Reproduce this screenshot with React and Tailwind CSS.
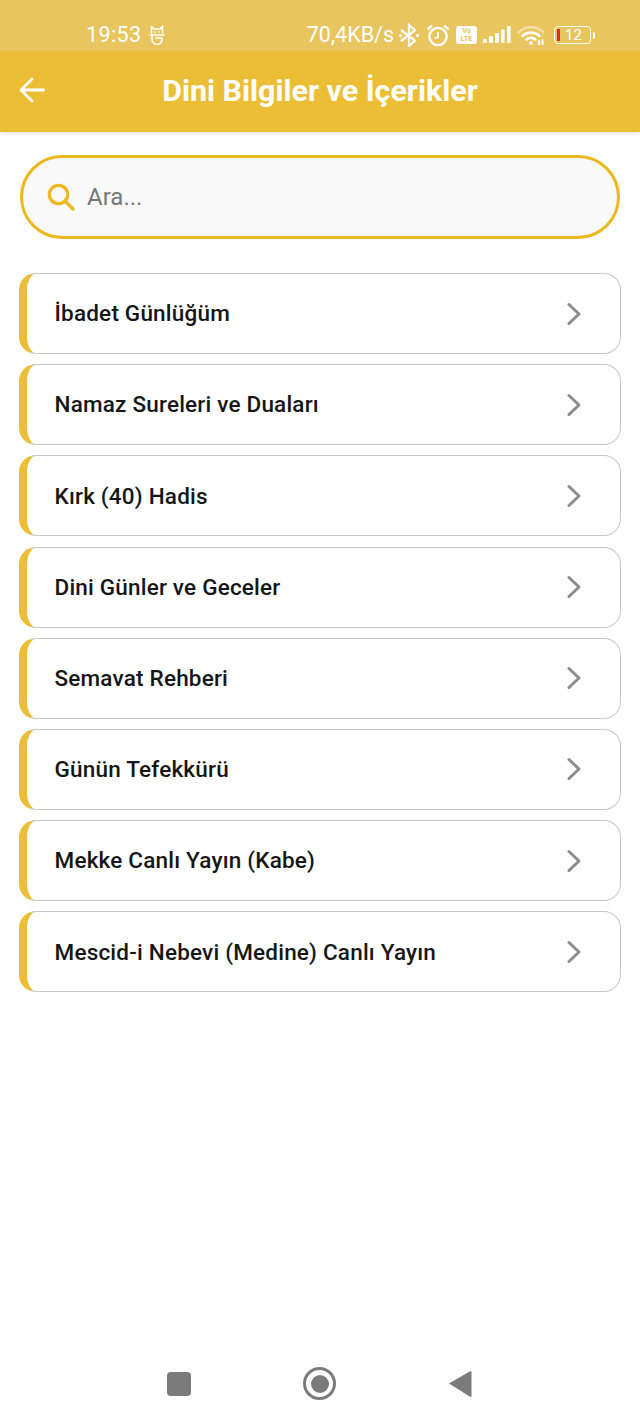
import React from "react";

const items = [
  "İbadet Günlüğüm",
  "Namaz Sureleri ve Duaları",
  "Kırk (40) Hadis",
  "Dini Günler ve Geceler",
  "Semavat Rehberi",
  "Günün Tefekkürü",
  "Mekke Canlı Yayın (Kabe)",
  "Mescid-i Nebevi (Medine) Canlı Yayın",
];

function StatusIcons() {
  return (
    <div className="flex items-center">
      <svg width="22" height="24" viewBox="0 0 22 24" className="ml-[4px]" fill="none" stroke="#fff" strokeWidth="2.2">
        <path d="M3 7l14 10.5L11 23V2l6 5.5L3 18" />
        <circle cx="2.5" cy="12.5" r="1.5" fill="#fff" stroke="none" />
        <circle cx="19.5" cy="12.5" r="1.5" fill="#fff" stroke="none" />
      </svg>
      <svg width="24" height="24" viewBox="0 0 24 24" className="ml-[6px]" fill="none" stroke="#fff" strokeWidth="2.4">
        <circle cx="12" cy="13.5" r="8.6" />
        <path d="M12 9v5l-3.5 1.5" strokeWidth="1.9" />
        <path d="M1.5 6.5 6 2.5M22.5 6.5 18 2.5" />
      </svg>
      <div className="ml-[6px] flex h-[18px] w-[21px] flex-col items-center justify-center rounded-[3px] bg-white text-[7.5px] leading-[8px] font-bold text-[#e8c55e] font-['Roboto',sans-serif]">
        <span>Vo</span>
        <span>LTE</span>
      </div>
      <svg width="28" height="18" viewBox="0 0 28 18" className="ml-[6px]" fill="#fff">
        <rect x="0" y="13" width="4" height="4" rx="1" />
        <rect x="6" y="10" width="4" height="7" rx="1" />
        <rect x="12" y="7" width="4" height="10" rx="1" />
        <rect x="18" y="3.5" width="3.6" height="13.5" rx="1" />
        <rect x="24" y="0" width="3.6" height="17" rx="1" />
      </svg>
      <svg width="28" height="20" viewBox="0 0 28 20" className="ml-[6px]" fill="none" stroke="#fff" strokeLinecap="round">
        <path d="M1.5 7.5C8 .5 20 .5 26.5 7.5" strokeWidth="2.4" opacity="0.45" />
        <path d="M5.5 11C10 6.5 18 6.5 22.5 11" strokeWidth="2.6" />
        <path d="M9.5 14.5c2.5-2.2 6.5-2.2 9 0" strokeWidth="2.6" />
        <circle cx="14" cy="18" r="1.9" fill="#fff" stroke="none" />
        <path d="M22 16v3M25.5 15v4" strokeWidth="2.2" />
      </svg>
      <div className="ml-[9px] flex items-center">
        <div className="flex h-[18px] w-[37px] items-center rounded-[4px] border border-white pl-[2px]">
          <div className="h-[12px] w-[3px] bg-[#e02b20]" />
          <span className="ml-[5px] text-[15px] leading-none text-white font-['Roboto',sans-serif]">12</span>
        </div>
        <div className="ml-[2px] h-[7px] w-[2px] rounded-r-sm bg-white" />
      </div>
    </div>
  );
}

export default function App() {
  return (
    <div className="flex h-[1422px] w-[640px] flex-col overflow-hidden bg-white font-['Roboto',sans-serif]">
      <div className="relative z-10 shadow-[0_2px_4px_rgba(0,0,0,0.10)]">
        <div className="flex h-[51px] items-end justify-between bg-[#e8c55e] pb-[2px] pl-[86px] pr-[45px]">
          <div className="flex items-center text-[21.5px] leading-[28px] tracking-[0.4px] text-white">
            <span>19:53</span>
            <svg width="16" height="20" viewBox="0 0 16 20" className="ml-[7px]" fill="none" stroke="#fff" strokeWidth="1.6" strokeLinecap="round">
              <path d="M2.5 1.5 5 4h6l2.5-2.5V8M2.5 1.5V8" />
              <path d="M1 10h14" />
              <path d="M3 10v4.5a5 5 0 0 0 10 0V13H7" />
              <circle cx="6" cy="6.8" r=".9" fill="#fff" stroke="none" />
              <circle cx="10" cy="6.8" r=".9" fill="#fff" stroke="none" />
            </svg>
          </div>
          <div className="flex items-center">
            <span className="text-[21.5px] leading-[28px] text-white">70,4KB/s</span>
            <StatusIcons />
          </div>
        </div>
        <div className="relative flex h-[81px] items-center justify-center bg-[#ebbe35]">
          <svg width="26" height="26" viewBox="0 0 26 26" className="absolute left-[19px] top-[26px]" fill="none" stroke="#fff" strokeWidth="2.8" strokeLinecap="round" strokeLinejoin="round">
            <path d="M24.5 13H2.5M13 2 2 13l11 11" />
          </svg>
          <h1 className="text-[30.4px] leading-none font-bold text-white">Dini Bilgiler ve İçerikler</h1>
        </div>
      </div>

      <div className="flex-1 px-[19px] pt-[23px]">
        <div className="mx-px flex h-[84px] items-center rounded-[42px] border-[3px] border-[#edb81f] bg-[#f9f9f9] pl-[24px]">
          <svg width="28" height="28" viewBox="0 0 28 28" fill="none" stroke="#edb81f" strokeWidth="3.2" strokeLinecap="round">
            <circle cx="11.5" cy="11.5" r="9.2" />
            <path d="M18.5 18.5l7.5 7.5" />
          </svg>
          <span className="ml-[12px] text-[24px] leading-none text-[#777777]">Ara...</span>
        </div>

        <div className="mt-[34px] flex flex-col gap-[10.2px]">
          {items.map((t) => (
            <div
              key={t}
              className="flex h-[81px] items-center justify-between rounded-[17px] border border-l-[8px] border-[#c9c9c9] border-l-[#ebbe35] bg-white pl-[27.5px] pr-[39px]"
            >
              <span className="text-[22.5px] leading-none font-medium tracking-[0.2px] text-[#161616]">{t}</span>
              <svg width="14" height="24" viewBox="0 0 14 24" fill="none" stroke="#8c8c8c" strokeWidth="3" strokeLinecap="round" strokeLinejoin="round">
                <path d="M2 2.5 12 12 2 21.5" />
              </svg>
            </div>
          ))}
        </div>
      </div>

      <div className="flex h-[78px] items-start justify-between pl-[167px] pr-[168px] pt-[23px]">
        <div className="mt-[5px] h-[24px] w-[24px] rounded-[4px] bg-[#7b7b7b]" />
        <div className="flex h-[33px] w-[33px] items-center justify-center rounded-full border-[3px] border-[#7b7b7b]">
          <div className="h-[18px] w-[18px] rounded-full bg-[#7b7b7b]" />
        </div>
        <svg width="24" height="28" viewBox="0 0 24 28" className="mt-[3px]" fill="#7b7b7b">
          <path d="M22.5 1 L1 13.5 L22.5 27 Q23.5 27 23.5 26 V2 Q23.5 1 22.5 1Z" />
        </svg>
      </div>
    </div>
  );
}
